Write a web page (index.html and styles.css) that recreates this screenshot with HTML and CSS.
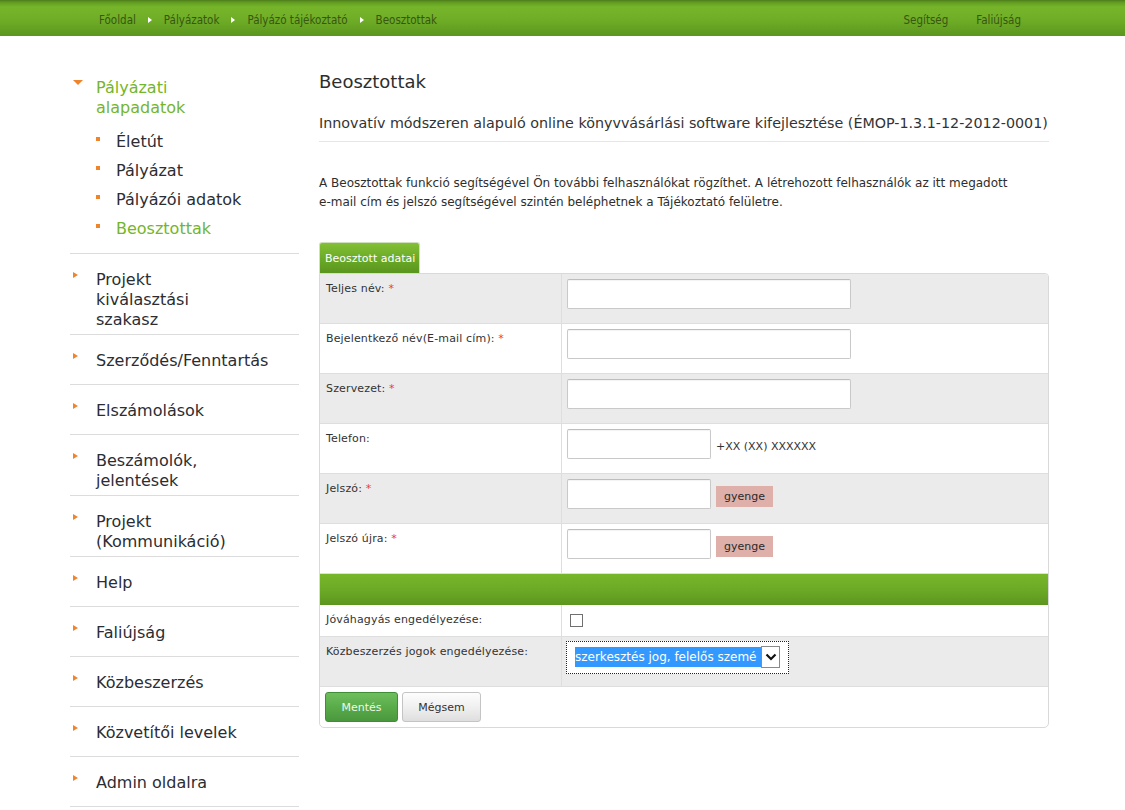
FILE: index.html
```html
<!DOCTYPE html>
<html lang="hu">
<head>
<meta charset="utf-8">
<title>Beosztottak</title>
<link rel="stylesheet" href="styles.css">
</head>
<body>
<header class="topbar">
  <nav class="crumbs">
    <a href="#">Főoldal</a><span class="sep"></span>
    <a href="#">Pályázatok</a><span class="sep"></span>
    <a href="#">Pályázó tájékoztató</a><span class="sep"></span>
    <a href="#">Beosztottak</a>
  </nav>
  <nav class="toplinks">
    <a href="#">Segítség</a>
    <a href="#">Faliújság</a>
  </nav>
</header>

<div class="layout">
  <aside class="sidebar">
    <ul class="menu">
      <li class="menu-item open">
        <a class="menu-link active" href="#">Pályázati<br>alapadatok</a>
        <ul class="submenu">
          <li><a href="#">Életút</a></li>
          <li><a href="#">Pályázat</a></li>
          <li><a href="#">Pályázói adatok</a></li>
          <li class="current"><a href="#">Beosztottak</a></li>
        </ul>
      </li>
      <li class="menu-item"><a class="menu-link" href="#">Projekt<br>kiválasztási<br>szakasz</a></li>
      <li class="menu-item"><a class="menu-link" href="#">Szerződés/Fenntartás</a></li>
      <li class="menu-item"><a class="menu-link" href="#">Elszámolások</a></li>
      <li class="menu-item"><a class="menu-link" href="#">Beszámolók,<br>jelentések</a></li>
      <li class="menu-item"><a class="menu-link" href="#">Projekt<br>(Kommunikáció)</a></li>
      <li class="menu-item"><a class="menu-link" href="#">Help</a></li>
      <li class="menu-item"><a class="menu-link" href="#">Faliújság</a></li>
      <li class="menu-item"><a class="menu-link" href="#">Közbeszerzés</a></li>
      <li class="menu-item"><a class="menu-link" href="#">Közvetítői levelek</a></li>
      <li class="menu-item"><a class="menu-link" href="#">Admin oldalra</a></li>
    </ul>
  </aside>

  <main class="content">
    <h1 class="title">Beosztottak</h1>
    <p class="subtitle">Innovatív módszeren alapuló online könyvvásárlási software kifejlesztése (ÉMOP-1.3.1-12-2012-0001)</p>
    <p class="intro">A Beosztottak funkció segítségével Ön további felhasználókat rögzíthet. A létrehozott felhasználók az itt megadott<br>e-mail cím és jelszó segítségével szintén beléphetnek a Tájékoztató felületre.</p>

    <div class="tabs"><span class="tab">Beosztott adatai</span></div>
    <div class="form">
      <div class="row alt">
        <div class="label">Teljes név: <span class="req">*</span></div>
        <div class="field"><span class="input wide"></span></div>
      </div>
      <div class="row">
        <div class="label">Bejelentkező név(E-mail cím): <span class="req">*</span></div>
        <div class="field"><span class="input wide"></span></div>
      </div>
      <div class="row alt">
        <div class="label">Szervezet: <span class="req">*</span></div>
        <div class="field"><span class="input wide"></span></div>
      </div>
      <div class="row">
        <div class="label">Telefon:</div>
        <div class="field"><span class="input short"></span><span class="hint">+XX (XX) XXXXXX</span></div>
      </div>
      <div class="row alt">
        <div class="label">Jelszó: <span class="req">*</span></div>
        <div class="field"><span class="input short"></span><span class="badge">gyenge</span></div>
      </div>
      <div class="row">
        <div class="label">Jelszó újra: <span class="req">*</span></div>
        <div class="field"><span class="input short"></span><span class="badge">gyenge</span></div>
      </div>
      <div class="band"></div>
      <div class="row compact">
        <div class="label">Jóváhagyás engedélyezése:</div>
        <div class="field"><span class="checkbox"></span></div>
      </div>
      <div class="row alt">
        <div class="label">Közbeszerzés jogok engedélyezése:</div>
        <div class="field select-field">
          <div class="select">
            <span class="select-value">szerkesztés jog, felelős szemé</span>
            <span class="select-arrow"><svg width="12" height="8" viewBox="0 0 12 8"><path d="M1.5 1.5 L6 6 L10.5 1.5" fill="none" stroke="#111" stroke-width="2.2"/></svg></span>
          </div>
        </div>
      </div>
      <div class="actions">
        <button class="btn btn-primary" type="button">Mentés</button>
        <button class="btn btn-default" type="button">Mégsem</button>
      </div>
    </div>
  </main>
</div>
</body>
</html>
```

FILE: styles.css
```css
* { box-sizing: border-box; }

html, body {
  margin: 0;
  padding: 0;
  background: #fff;
}

body {
  width: 1125px;
  min-height: 810px;
  color: #333;
  font-family: "DejaVu Sans", Verdana, sans-serif;
}

a { text-decoration: none; }

/* ---------- top bar ---------- */
.topbar {
  height: 36px;
  display: flex;
  align-items: center;
  justify-content: space-between;
  padding: 4px 104px 0 99px;
  background: linear-gradient(#4d7a1a 0, #5f9a21 2px, #76b52a 7px, #6fad27 20px, #5b951f 36px);
  font-family: "DejaVu Sans Condensed", "DejaVu Sans", sans-serif;
  font-stretch: condensed;
  font-size: 11.5px;
  line-height: 16px;
}

.topbar a { color: #37560f; }

.crumbs {
  display: flex;
  align-items: center;
  gap: 12px;
}

.crumbs .sep {
  width: 0;
  height: 0;
  border-left: 4px solid #fff;
  border-top: 3px solid transparent;
  border-bottom: 3px solid transparent;
}

.toplinks {
  display: flex;
  gap: 28px;
}

/* ---------- layout ---------- */
.layout {
  display: flex;
  gap: 20px;
  padding: 26px 0 0 70px;
}

.sidebar {
  width: 229px;
  flex: none;
}

.content {
  width: 730px;
  flex: none;
}

/* ---------- sidebar menu ---------- */
.menu {
  list-style: none;
  margin: 0;
  padding: 0;
  font-size: 16px;
  line-height: 20px;
}

.menu-item {
  min-height: 50px;
  padding: 16px 0 4px;
  border-bottom: 1px solid #dcdcdc;
}

.menu-link {
  display: flex;
  align-items: flex-start;
  color: #2b2d33;
}

.menu-link::before {
  content: "";
  flex: none;
  width: 0;
  height: 0;
  margin: 2px 18px 0 3px;
  border-left: 5px solid #f0842a;
  border-top: 3.5px solid transparent;
  border-bottom: 3.5px solid transparent;
}

.menu-item.open > .menu-link::before {
  margin: 2px 13px 0 3px;
  border-left: 5px solid transparent;
  border-right: 5px solid transparent;
  border-top: 5px solid #f0842a;
  border-bottom: 0;
}

.menu-link.active { color: #74b52a; }

.submenu {
  list-style: none;
  margin: 14px 0 10px;
  padding: 0;
  display: flex;
  flex-direction: column;
  gap: 9px;
}

.submenu li {
  display: flex;
  align-items: flex-start;
}

.submenu li::before {
  content: "";
  flex: none;
  width: 4px;
  height: 4px;
  margin: 5px 16px 0 26px;
  background: #f0842a;
}

.submenu a { color: #2b2d33; }
.submenu .current a { color: #74b52a; }

/* ---------- content ---------- */
.title {
  margin: 9px 0 0;
  font-size: 18px;
  line-height: 22px;
  font-weight: normal;
  color: #2e2e2e;
}

.subtitle {
  margin: 20px 0 0;
  padding-bottom: 8px;
  border-bottom: 1px solid #e6e6e6;
  font-size: 14.3px;
  line-height: 20px;
  color: #333;
  white-space: nowrap;
}

.intro {
  margin: 32px 0 0;
  font-size: 12px;
  line-height: 19px;
  color: #2e2e2e;
  white-space: nowrap;
}

.tabs {
  margin-top: 30px;
  display: flex;
}

.tab {
  display: block;
  height: 31px;
  padding: 0 4px 0 5px;
  line-height: 31px;
  font-size: 11px;
  color: #fff;
  background: linear-gradient(#83c035, #6aa927 55%, #5a951d);
  border: 1px solid #cfe0bd;
  border-bottom: 0;
  border-radius: 3px 3px 0 0;
}

/* ---------- form table ---------- */
.form {
  border: 1px solid #d9d9d9;
  border-radius: 0 4px 5px 5px;
  font-size: 11px;
  line-height: 14px;
  color: #333;
  overflow: hidden;
}

.row {
  display: grid;
  grid-template-columns: 242px 1fr;
  min-height: 50px;
  border-bottom: 1px solid #dedede;
  background: #fff;
}

.row.alt { background: #ebebeb; }
.row.compact { min-height: 32px; }

.label {
  padding: 8px 6px;
  border-right: 1px solid #dedede;
  letter-spacing: 0.15px;
}

.req { color: #e0403a; }

.field {
  display: flex;
  align-items: flex-start;
  gap: 5px;
  padding: 5px;
}

.input {
  display: block;
  height: 30px;
  background: #fff;
  border: 1px solid #c9c9c9;
  border-top-color: #bdbdbd;
  border-radius: 2px;
  box-shadow: inset 0 1px 1px rgba(0,0,0,0.05);
}

.input.wide { width: 284px; }
.input.short { width: 144px; }

.hint {
  margin-top: 11px;
  color: #333;
}

.badge {
  margin-top: 7px;
  padding: 0 8px;
  height: 21px;
  line-height: 21px;
  background: #dfb0aa;
  color: #2a2a2a;
}

.band {
  height: 31px;
  background: linear-gradient(#78b62b, #6caa26 50%, #5d961f);
}

.checkbox {
  display: block;
  width: 13px;
  height: 13px;
  margin: 4px 0 0 3px;
  border: 1px solid #707070;
  background: #fff;
}

.select-field { padding: 4px 4px; }

.select {
  display: flex;
  align-items: flex-start;
  width: 223px;
  height: 33px;
  padding: 4px 0 0 8px;
  border: 1px dotted #222;
  background: #fff;
}

.select-value {
  display: block;
  flex: none;
  width: 186px;
  margin-top: 1px;
  white-space: nowrap;
  font-size: 12px;
  line-height: 20px;
  color: #fff;
  background: #3399ff;
}

.select-arrow {
  display: flex;
  align-items: center;
  justify-content: center;
  flex: none;
  width: 19px;
  height: 22px;
  border: 1px solid #8a8a8a;
  background: #fff;
}

.actions {
  display: flex;
  gap: 4px;
  height: 40px;
  padding: 5px;
}

.btn {
  height: 30px;
  padding: 0;
  border-radius: 3px;
  font-family: "DejaVu Sans", Verdana, sans-serif;
  font-size: 11px;
  cursor: pointer;
}

.btn-primary {
  width: 73px;
  color: #eef8ea;
  border: 1px solid #3f8d35;
  background: linear-gradient(#6fbe5e, #5aab4a 50%, #4a983d);
}

.btn-default {
  width: 79px;
  color: #333;
  border: 1px solid #c4c4c4;
  background: linear-gradient(#fdfdfd, #f0f0f0 50%, #dedede);
}
```
